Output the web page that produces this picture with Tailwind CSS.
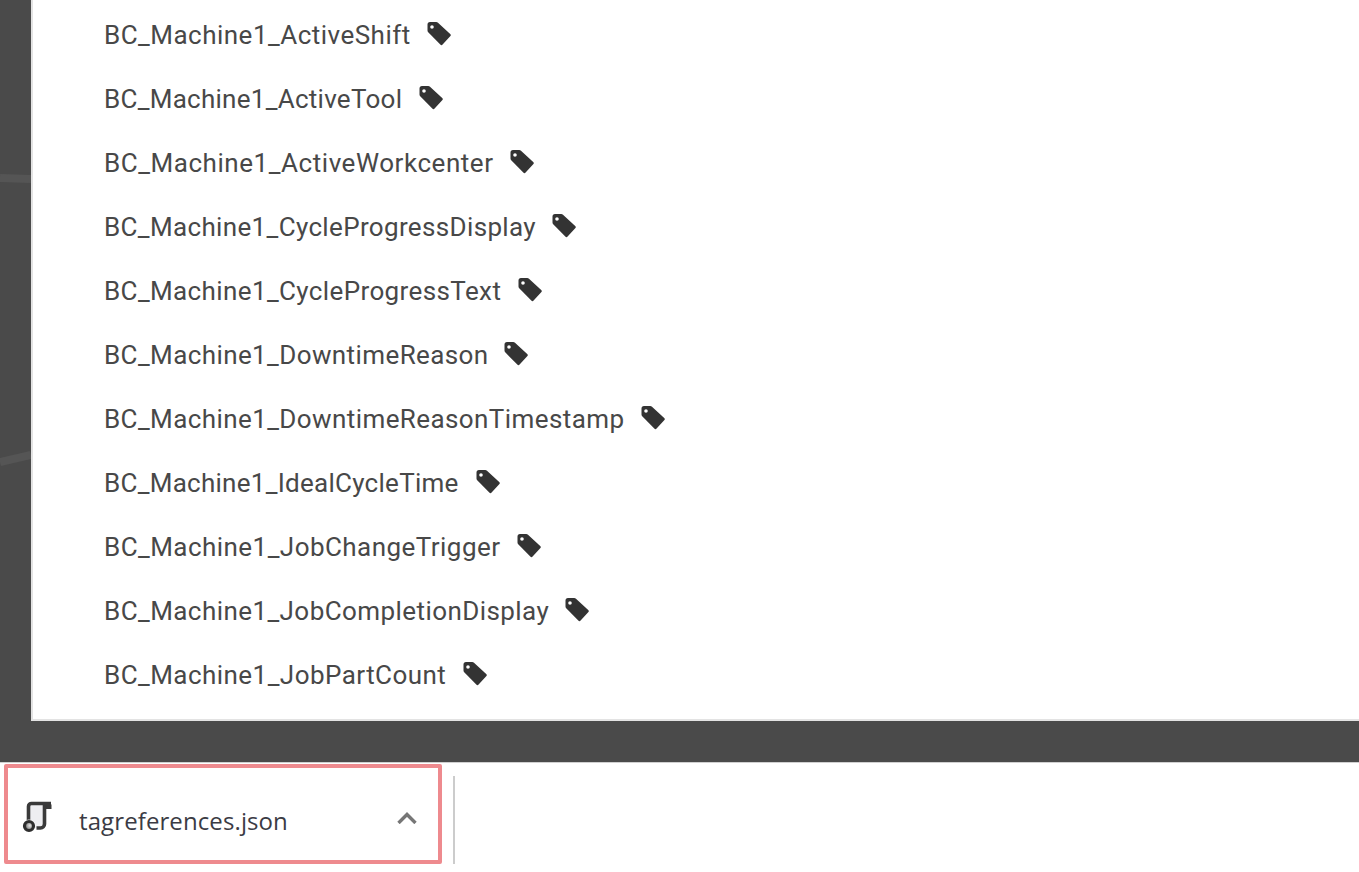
<!DOCTYPE html>
<html lang="en">
<head>
  <meta charset="UTF-8">
  <meta name="viewport" content="width=device-width, initial-scale=1">
  <title>Tag references</title>
  <script src="https://cdn.jsdelivr.net/npm/@tailwindcss/browser@4"></script>
</head>
<body class="h-[872px] overflow-hidden bg-white font-['Roboto',sans-serif]">
  <svg width="0" height="0" class="absolute">
    <symbol id="tag" viewBox="0 0 24 24">
      <path fill="#333333" fill-rule="evenodd" d="M3 0H9.2A2.5 2.5 0 0 1 11 .8L23.2 12a1.6 1.6 0 0 1 0 2.3L15.6 22.6a1.6 1.6 0 0 1-2.3 0L1.2 10.3A2.5 2.5 0 0 1 .5 8.6V2.5A2.5 2.5 0 0 1 3 0ZM5 3.2a1.8 1.8 0 1 0 0 3.6a1.8 1.8 0 1 0 0-3.6Z"/>
    </symbol>
    <radialGradient id="disc" cx="0.6" cy="0.45" r="0.6">
      <stop offset="0" stop-color="#e4e4e4"/>
      <stop offset="1" stop-color="#6a6a6a"/>
    </radialGradient>
  </svg>

  <!-- page background -->
  <div class="relative h-[763px] bg-[#4a4a4a] border-b border-[#d0d0d0] pl-[31px] overflow-hidden">
    <svg class="absolute left-0 top-0" width="31" height="763" fill="none" stroke="#555555" stroke-width="8">
      <path d="M0 178L31 179"/>
      <path d="M0 462L31 455"/>
    </svg>
    <ul class="h-[721px] bg-white border-l-2 border-b-2 border-[#e3e3e3] pl-[71px] pt-[3px] text-[26px] text-[#484848] font-normal">
      <li class="h-16 flex items-center"><span class="w-[323px] tracking-[0.48px]">BC_Machine1_ActiveShift</span><svg class="w-6 h-6 -mt-[2px]"><use href="#tag"/></svg></li>
      <li class="h-16 flex items-center"><span class="w-[315px] tracking-[0.27px]">BC_Machine1_ActiveTool</span><svg class="w-6 h-6 -mt-[2px]"><use href="#tag"/></svg></li>
      <li class="h-16 flex items-center"><span class="w-[406px] tracking-[0.55px]">BC_Machine1_ActiveWorkcenter</span><svg class="w-6 h-6 -mt-[2px]"><use href="#tag"/></svg></li>
      <li class="h-16 flex items-center"><span class="w-[448px] tracking-[0.35px]">BC_Machine1_CycleProgressDisplay</span><svg class="w-6 h-6 -mt-[2px]"><use href="#tag"/></svg></li>
      <li class="h-16 flex items-center"><span class="w-[414px] tracking-[0.38px]">BC_Machine1_CycleProgressText</span><svg class="w-6 h-6 -mt-[2px]"><use href="#tag"/></svg></li>
      <li class="h-16 flex items-center"><span class="w-[400px] tracking-[0.4px]">BC_Machine1_DowntimeReason</span><svg class="w-6 h-6 -mt-[2px]"><use href="#tag"/></svg></li>
      <li class="h-16 flex items-center"><span class="w-[537px] tracking-[0.41px]">BC_Machine1_DowntimeReasonTimestamp</span><svg class="w-6 h-6 -mt-[2px]"><use href="#tag"/></svg></li>
      <li class="h-16 flex items-center"><span class="w-[372px] tracking-[0.27px]">BC_Machine1_IdealCycleTime</span><svg class="w-6 h-6 -mt-[2px]"><use href="#tag"/></svg></li>
      <li class="h-16 flex items-center"><span class="w-[413px] tracking-[0.45px]">BC_Machine1_JobChangeTrigger</span><svg class="w-6 h-6 -mt-[2px]"><use href="#tag"/></svg></li>
      <li class="h-16 flex items-center"><span class="w-[461px] tracking-[0.43px]">BC_Machine1_JobCompletionDisplay</span><svg class="w-6 h-6 -mt-[2px]"><use href="#tag"/></svg></li>
      <li class="h-16 flex items-center"><span class="w-[359px] tracking-[0.45px]">BC_Machine1_JobPartCount</span><svg class="w-6 h-6 -mt-[2px]"><use href="#tag"/></svg></li>
    </ul>
  </div>

  <!-- download bar -->
  <div class="flex items-start h-[109px] pl-[4px]">
    <div class="w-[438px] h-[100px] mt-[1px] border-[4px] border-[#ee8a8e] rounded-[2px] flex items-center pl-[14px] pr-[21px] pt-[11px]">
      <svg class="w-[32px] h-[32px] shrink-0 -mt-[6px]" viewBox="0 0 32 32" fill="none">
        <path d="M7 20V3h16v21a3 3 0 0 1-3 3h-8z" fill="#eeeef1"/>
        <path d="M6.500 19V5.500a3 3 0 0 1 3-3H29" stroke="#3a3a3a" stroke-width="3.600"/>
        <path d="M22 2h5a2.500 2.500 0 0 1 2.500 2.500V8H22z" fill="#3a3a3a"/>
        <path d="M22.500 4v19a4 4 0 0 1-4 4h-4" stroke="#3a3a3a" stroke-width="3.600"/>
        <circle cx="7" cy="25" r="6.500" fill="#ffffff"/>
        <circle cx="7" cy="25" r="4.500" fill="url(#disc)" stroke="#2e2e2e" stroke-width="3.200"/>
      </svg>
      <span class="ml-[25px] mt-[2px] text-[24px] text-[#3b3b44] tracking-[0.1px] font-['Open_Sans',sans-serif] flex-1">tagreferences.json</span>
      <svg class="w-[20px] h-[12px] -mt-[3px]" viewBox="0 0 20 12" fill="none" stroke="#767676" stroke-width="3.400"><path d="M1.500 11L10 2.500 18.500 11"/></svg>
    </div>
    <div class="w-[2px] h-[88px] mt-[13px] ml-[11px] bg-[#cccccc]"></div>
  </div>
</body>
</html>
